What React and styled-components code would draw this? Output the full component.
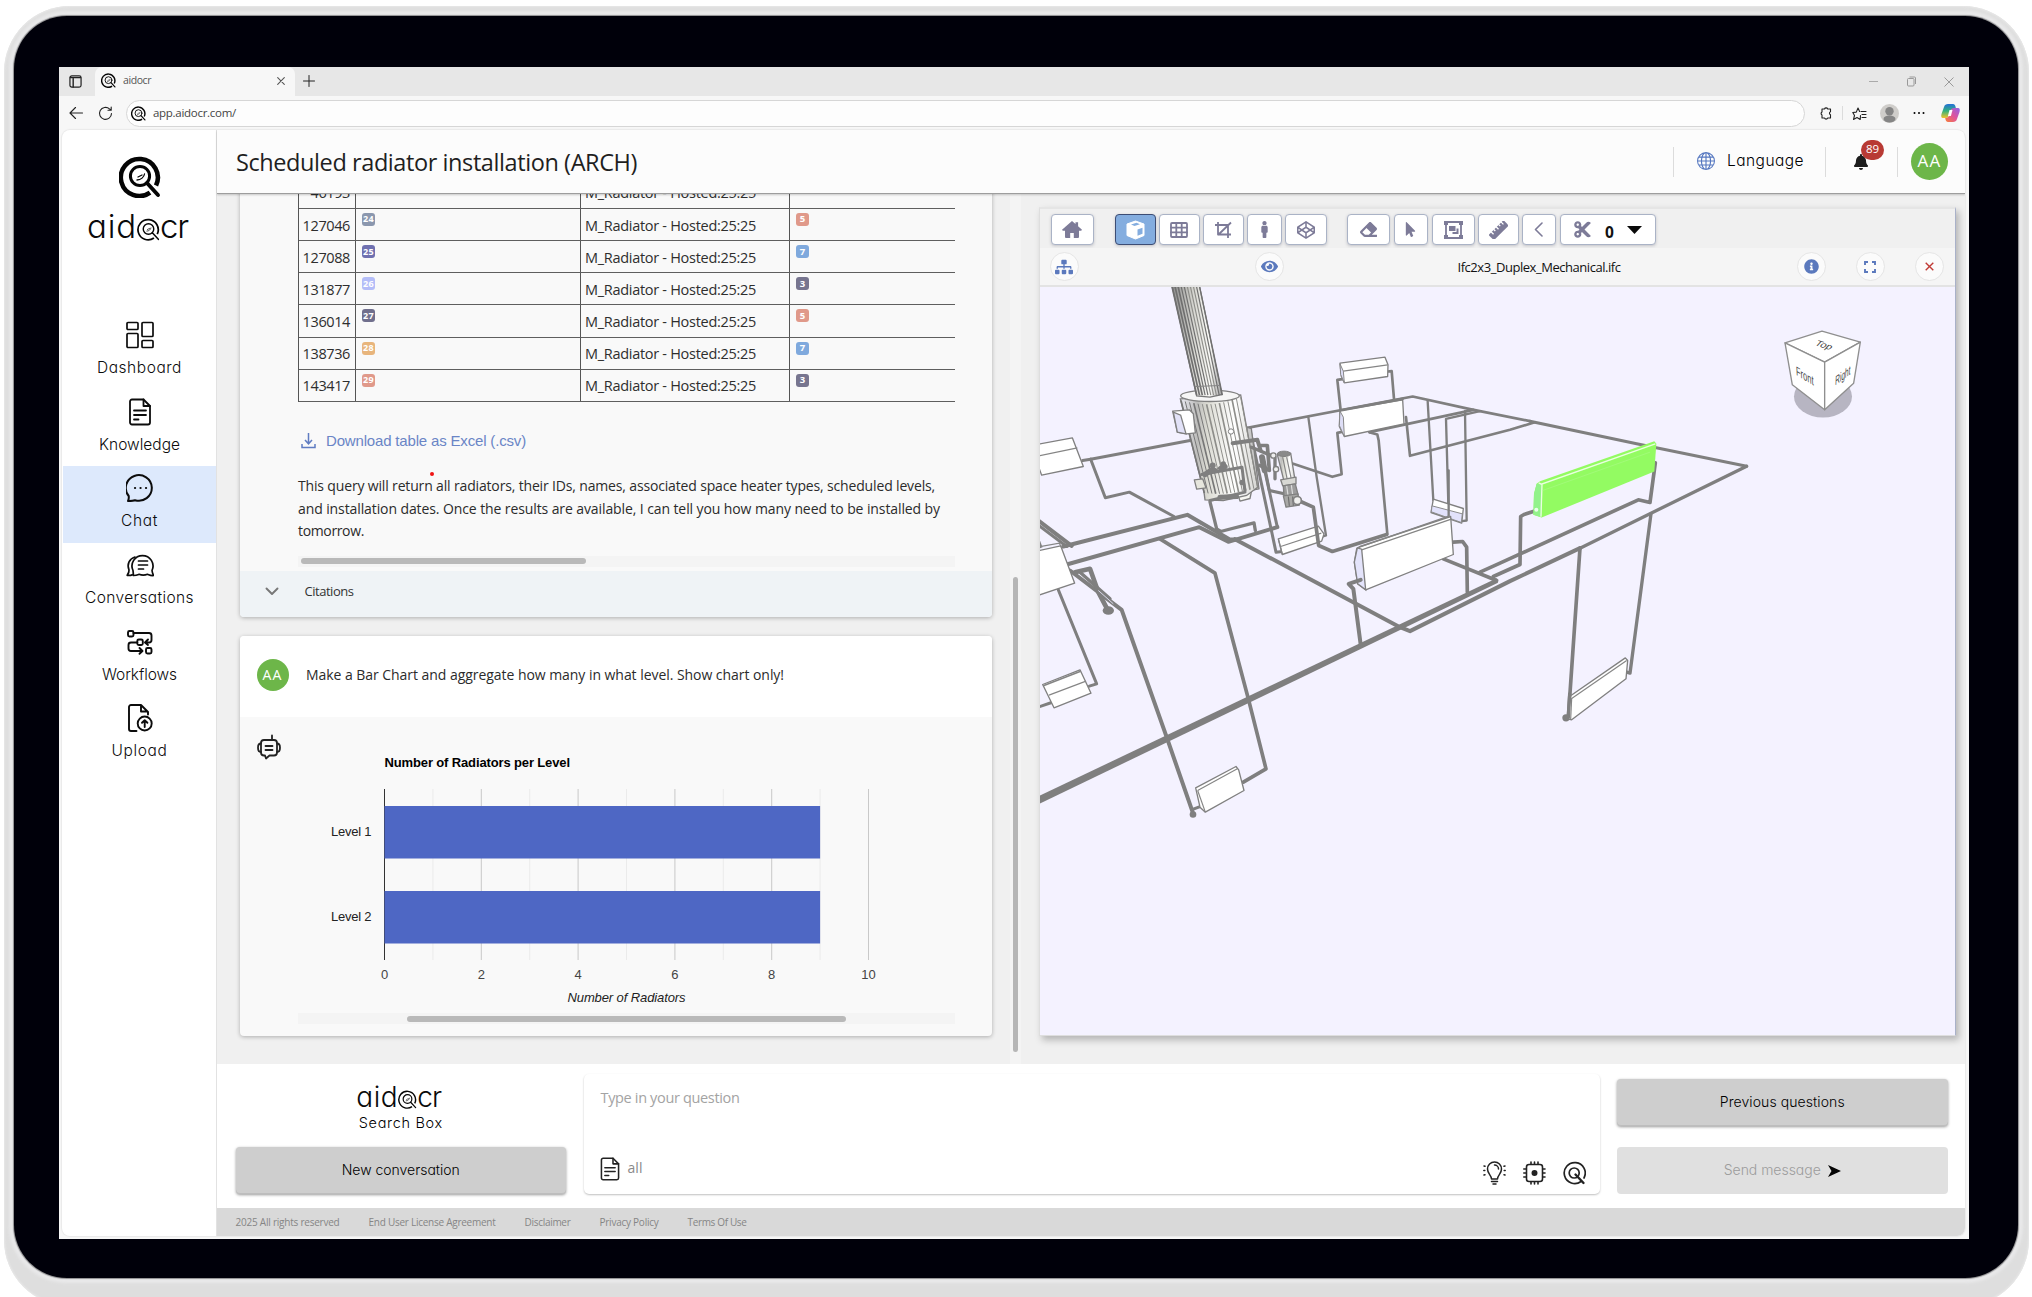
import React, { useLayoutEffect, useRef, useState } from "react";
import styled, { createGlobalStyle, css } from "styled-components";
import {
  FaMale, FaCodepen, FaEraser, FaMousePointer,
  FaCut, FaSitemap, FaEye, FaInfoCircle, FaBell,
} from "react-icons/fa";
import { BsGlobe } from "react-icons/bs";

const UI = '"Open Sans", "Noto Sans", sans-serif';
const ROUND = 'Inter, "Noto Sans", sans-serif';
const ARIAL = '"Liberation Sans", Arial, sans-serif';

const Global = createGlobalStyle`
  * { box-sizing: border-box; }
  body { margin: 0; background: #fff; font-family: ${UI}; color: #222; overflow: hidden; }
  svg { display: block; flex: none; }
`;

/* ---------- text ---------- */
const Span = styled.span`
  display: inline-block;
  align-self: ${(p) => p.$self || "auto"};
  white-space: pre;
  font-family: ${(p) => p.$font || UI};
  font-size: ${(p) => p.$size}px;
  font-weight: ${(p) => p.$weight || 400};
  color: ${(p) => p.$color || "inherit"};
  line-height: ${(p) => (p.$lh ? p.$lh + "px" : 1.3)};
  ${(p) => p.$font === ROUND && css`font-feature-settings: "cv11" 1;`}
`;

/* Spreads its letters so that the line takes the given width. */
function Label({ w, children, ...rest }) {
  const ref = useRef(null);
  const [spacing, setSpacing] = useState(0);
  useLayoutEffect(() => {
    if (!w) return;
    const natural = ref.current.getBoundingClientRect().width;
    setSpacing((w - natural) / children.length);
  }, [w, children]);
  return <Span ref={ref} style={{ letterSpacing: spacing }} {...rest}>{children}</Span>;
}

/* ---------- device ---------- */
const Page = styled.div`
  width: 2032px; height: 1297px; overflow: hidden;
  padding: 6px 3px 0 4px;
`;
const Bezel = styled.div`
  height: 1300px; border-radius: 66px;
  padding: 10px 11px 0 10px;
  background: #dedede;
  box-shadow: inset 0 0 2px 1px #e8e8e8;
`;
const Glass = styled.div`
  height: 1262px; border-radius: 53px;
  background: #00000a;
  padding: 51px 49px 39px 45px;
  box-shadow: 0 0 1px 1px #8d8d8f, 0 0 3px 5px #e9e9ea;
`;
const Screen = styled.div`
  height: 1172px; background: #f7f7f7;
  display: flex; flex-direction: column;
`;

/* ---------- browser ---------- */
const TabStrip = styled.div`
  height: 29px; background: #e7e7e7; display: flex; align-items: stretch;
`;
const TabMenu = styled.div`
  width: 36px; padding-left: 10px; display: flex; align-items: center;
`;
const Tab = styled.div`
  width: 200px; background: #f7f7f7; border-radius: 7px 7px 0 0;
  display: flex; align-items: center; padding: 0 10px 2px 6px; gap: 7px; color: #555;
`;
const Grow = styled.div`flex: 1;`;
const NewTab = styled.div`width: 28px; display: grid; place-items: center; padding-bottom: 2px;`;
const WindowButtons = styled.div`
  display: flex; align-items: center; gap: 27px; padding: 0 15px 0 0;
`;
const AddressRow = styled.div`
  height: 34px; display: flex; align-items: center; padding: 0 9px 0 10px;
`;
const NavIcons = styled.div`display: flex; gap: 15px; width: 57px; align-items: center;`;
const Address = styled.div`
  width: 1679px; height: 27px; border-radius: 14px; background: #fdfdfd;
  border: 1px solid #d6d6d6; display: flex; align-items: center; padding-left: 4px; gap: 7px;
`;
const BrowserTools = styled.div`flex: 1; display: flex; align-items: center;`;
const Slot = styled.div`margin-left: ${(p) => p.$ml}px;`;
const Rule = styled.div`width: 1px; height: ${(p) => p.$h}px; background: #dcdcdc;`;

/* ---------- app shell ---------- */
const AppFrame = styled.div`
  height: 1106px; margin: 0 4px 0 3px; border-radius: 8px; overflow: hidden; display: flex;
  background: #fff; box-shadow: 0 0 1px 1px #e9e9e9;
`;
const Sidebar = styled.nav`
  width: 155px; border-right: 1px solid #e2e2e2; padding: 26px 0 0 1px;
  display: flex; flex-direction: column; align-items: center;
`;
const LogoGap = styled.div`height: 11px; flex: none;`;
const Wordmark = styled.div`
  display: flex; align-items: center; height: ${(p) => p.$h}px; color: #0a0a0a; padding-right: 4px; flex: none;
`;
const Mark = styled.div`padding-top: ${(p) => p.$s * 0.2}px;`;
const NavList = styled.div`width: 100%; margin-top: 70px; flex: none;`;
const NavItem = styled.a`
  width: 100%; height: 76.7px; padding-top: 8px;
  display: flex; flex-direction: column; align-items: center; gap: 9px;
  background: ${(p) => (p.$active ? "#dde9fc" : "transparent")};
  color: #0c0c0c;
`;
const NavIcon = styled.div`width: 30px; height: 28px; display: grid; place-items: center;`;
const Main = styled.main`width: 1748px; display: flex; flex-direction: column;`;
const Header = styled.header`
  height: 64px; background: #fcfcfc; border-bottom: 1px solid #9d9d9d; z-index: 2;
  box-shadow: 0 1px 2px rgba(0,0,0,.2); flex: none;
  display: flex; align-items: center; padding: 0 17px 0 19px;
`;
const TitleBox = styled.div`padding-top: 2px;`;
const Language = styled.div`
  display: flex; align-items: center; gap: 12px; padding: 0 21px 0 23px;
`;
const Bell = styled.div`position: relative; padding: 0 28px 0 27px; color: #1d1d1d;`;
const Count = styled.div`
  position: absolute; left: 35px; top: -14px; width: 23px; height: 20px; border-radius: 10px;
  background: #b83a34; display: grid; place-items: center;
`;
const AvatarGap = styled.div`width: 13px;`;
const Avatar = styled.div`
  width: ${(p) => p.$d}px; height: ${(p) => p.$d}px; border-radius: 50%; background: #6db649;
  display: grid; place-items: center; flex: none;
`;

/* ---------- workspace ---------- */
const Workspace = styled.section`
  height: 870px; background: #f0f0f0; display: flex; padding-left: 14.5px; flex: none;
`;
const Thread = styled.div`
  width: 768px; padding: 0 8px 28px; overflow: hidden;
  display: flex; flex-direction: column; justify-content: flex-end; gap: 19px;
`;
const Card = styled.article`
  position: relative; flex: none; background: #f9f9f9; border-radius: 4px; overflow: hidden;
  box-shadow: 0 1px 4px rgba(0,0,0,.28);
`;
const CardBody = styled.div`padding: 0 37px 4.5px 58.5px;`;
const Table = styled.div`border-left: 1px solid #555; overflow: hidden;`;
const Row = styled.div`
  display: grid; grid-template-columns: 57px 225px 209px 1fr; height: 32.2px;
  border-bottom: 1px solid #5e5e5e; color: #2e2e2e;
`;
const Cell = styled.div`
  display: flex; align-items: center;
  justify-content: ${(p) => (p.$right ? "flex-end" : "flex-start")};
  padding: 3px 5px 0 ${(p) => p.$pl || 4}px;
  border-right: ${(p) => (p.$last ? "0" : "1px solid #555")};
`;
const Chip = styled.div`
  width: 13px; height: 13px; border-radius: 3px; background: ${(p) => p.$c};
  align-self: flex-start; margin-top: 1px; display: grid; place-items: center;
`;
const Download = styled.a`
  margin-top: 27px; height: 24px; display: flex; align-items: center; gap: 10px; padding-left: 3px;
`;
const Paragraph = styled.div`
  margin-top: 22px; display: flex; flex-direction: column; align-items: flex-start; color: #2b2b2b;
`;
const RedDot = styled.div`
  position: absolute; left: 190px; bottom: 141px; width: 4px; height: 4px; border-radius: 50%; background: #f01414;
`;
const Track = styled.div`
  height: 11px; background: #f4f4f4; margin-top: ${(p) => p.$mt}px; padding: ${(p) => p.$pt ?? 2}px 0 0 ${(p) => p.$x}px;
`;
const Thumb = styled.div`width: ${(p) => p.$w}px; height: 6px; border-radius: 3px; background: #b9b9b9;`;
const Citations = styled.div`
  height: 46px; background: #eff3f6; display: flex; align-items: center; padding: 0 0 5px 25px; gap: 26px;
`;
const Question = styled.div`
  height: 81px; background: #fff; display: flex; align-items: center; padding: 0 0 3px 17px; gap: 17.5px;
`;
const Answer = styled.div`height: 319px; display: flex; padding-left: 17px;`;
const BotIcon = styled.div`padding-top: 17px; width: 41px;`;
const ChartBox = styled.div`width: 657px;`;
const VScroll = styled.div`
  width: 11px; margin: 0 18px 0 10px; background: #f4f4f4; display: flex; justify-content: center;
`;
const VThumb = styled.div`width: 5px; height: 475px; margin-top: 383px; border-radius: 3px; background: #b6b6b6;`;

/* ---------- viewer ---------- */
const Viewer = styled.section`
  width: 917px; height: 829px; margin-top: 13px; border: 1px solid #dedede; border-right-color: #a9b1c9;
  border-top: 2px solid #e5e5e5; box-shadow: 3px 4px 7px rgba(0,0,0,.25);
  display: flex; flex-direction: column; background: #f0f0f0;
`;
const Toolbar = styled.div`
  height: 39px; display: flex; align-items: flex-start; padding: 5px 0 0 11px; flex: none;
`;
const Tool = styled.button`
  width: ${(p) => p.$w}px; height: 31px; margin: 0 0 0 ${(p) => p.$ml}px; padding: 0;
  border: 1px solid ${(p) => (p.$on ? "#3d4d74" : "#aab3c6")}; border-radius: 4px;
  background: ${(p) => (p.$on ? "#84addf" : "#fff")}; color: #7d7b98;
  box-shadow: 0 1px 3px rgba(60,60,80,.25);
  display: flex; align-items: center; justify-content: center; gap: ${(p) => p.$gap || 0}px;
`;
const CutCount = styled.div`padding-top: 6px;`;
const SubBar = styled.div`
  height: 39px; background: #f5f5f5; border-bottom: 2px solid #e3e3e3; flex: none;
  display: flex; align-items: center; padding-left: 10px;
`;
const RoundButton = styled.div`
  width: 29px; height: 29px; border-radius: 50%; background: #fbfbfb; border: 1px solid #e5e5e5;
  display: grid; place-items: center; color: #5b79bd; margin-left: ${(p) => p.$ml || 0}px;
`;
const FileName = styled.div`margin-left: 174px; width: 164px; color: #111; padding-bottom: 1px;`;
const Scene = styled.svg`background: #f4f2ff; width: 915px; height: 748px;`;

/* ---------- ask panel ---------- */
const Ask = styled.section`
  height: 144px; background: #fff; display: flex; padding-left: 18.5px; gap: 17.5px; flex: none;
`;
const Brand = styled.div`
  width: 330.5px; padding-top: 19px; display: flex; flex-direction: column; align-items: center;
`;
const SearchBox = styled.div`height: 21px;`;
const Button = styled.button`
  width: 100%; height: 47px; border: 0; border-radius: 4px; padding: 0; flex: none;
  margin-top: ${(p) => p.$mt || 0}px;
  background: ${(p) => (p.$off ? "#e0e0e0" : "#cecece")};
  box-shadow: ${(p) => (p.$off ? "none" : "0 1px 3px rgba(0,0,0,.4), inset 0 -1px 0 #bdbdbd")};
  display: flex; align-items: center; justify-content: center; gap: 7px; color: #262626;
`;
const Prompt = styled.div`
  width: 1016px; height: 120px; margin-top: 10px; border-radius: 5px; padding: 12px 14px 9px 14px;
  box-shadow: 0 1px 2px rgba(0,0,0,.25); display: flex; flex-direction: column; justify-content: space-between;
`;
const Placeholder = styled.div`padding-left: 3px;`;
const PromptFoot = styled.div`display: flex; align-items: center; gap: 6px;`;
const PromptTools = styled.div`display: flex; gap: 17px; margin: 9px 0 0 auto;`;
const Actions = styled.div`width: 330.5px; padding-top: 15px;`;
const Footer = styled.footer`
  height: 28px; background: #d9d9d9; display: flex; align-items: center; gap: 29px; padding-left: 18.5px; color: #858585;
`;

/* ---------- icons ---------- */
const LogoMark = ({ size, sw = 5.5, thin }) => (
  <svg width={size} height={size} viewBox="0 0 42 42" fill="none" stroke="#050505" strokeWidth={sw} strokeLinecap="round">
    <path d="M31 36.600 A18.500 18.500 0 1 1 37 29.500" strokeLinecap="butt" />
    <circle cx="21" cy="20" r="9.6" strokeWidth={thin || sw * 0.65} />
    <path d="M28 27 L39 39" strokeWidth={sw * 0.85} />
    <path d="M18 24 C22 24 25 21 25.5 18 M19 21 L23 19" strokeWidth="1.3" />
  </svg>
);

const AidocrWord = ({ h, size, mark, w1, w2 }) => (
  <Wordmark $h={h}>
    <Label $font={ROUND} $size={size} $weight={300} w={w1} $lh={h}>aid</Label>
    <Mark $s={size}><LogoMark size={mark} sw={3.2} thin={2.6} /></Mark>
    <Label $font={ROUND} $size={size} $weight={300} w={w2} $lh={h}>cr</Label>
  </Wordmark>
);

const Line = ({ w = 28, h = w, vb = "0 0 28 28", sw = 1.7, children }) => (
  <svg width={w} height={h} viewBox={vb} fill="none" stroke="currentColor" strokeWidth={sw} strokeLinecap="round" strokeLinejoin="round">{children}</svg>
);
const DashboardIcon = () => (
  <Line><rect x="1" y="1.5" width="11" height="7" rx="1" /><rect x="1" y="12.5" width="11" height="14" rx="1" />
    <rect x="16" y="1.5" width="11" height="14" rx="1" /><rect x="16" y="19.5" width="11" height="7" rx="1" /></Line>
);
const DocIcon = ({ w = 28 }) => (
  <Line w={w} sw={1.8}><path d="M6 1.5h11.5L24 8v16.5a2 2 0 0 1-2 2H6a2 2 0 0 1-2-2v-21a2 2 0 0 1 2-2z" />
    <path d="M17.5 1.5V8H24M8 12.5h12M8 17h12M8 21.5h4.5" /></Line>
);
const ChatIcon = () => (
  <Line sw={2}><path d="M2 27c1-2 1-3 .7-5A13 12.8 0 1 1 9 26.2C7 26.8 5 27.2 2 27z" />
    <path d="M9 14h.1M14.5 14h.1M20 14h.1" strokeWidth="2.2" /></Line>
);
const ConversationsIcon = () => (
  <Line sw={1.7}><path d="M7.2 24.5c.3-2 0-3-.2-5A10.500 10.500 0 1 1 26 19.500c.2 2 .8 3.400 1.500 5-3.500.3-4.500-.8-6-1.200a12 12 0 0 1-8.500 0c-1.500.6-3 1.300-5.800 1.200z" />
    <path d="M9 6C3 8 .8 13.500 3 19c.2 2-.5 3.500-1.800 5.300 2 .3 3.500.3 5-.6M12.500 10h9M12.500 14h9M12.500 18h5" /></Line>
);
const WorkflowIcon = () => (
  <Line sw={1.9}><rect x="2" y="3" width="5.500" height="5.500" rx="1.500" /><rect x="11.300" y="11.500" width="5.500" height="5.500" rx="1.500" />
    <rect x="20" y="20" width="5.500" height="5.500" rx="1.500" />
    <path d="M7.500 5H23a2.500 2.500 0 0 1 2.500 2.500V12a2.500 2.500 0 0 1-2.500 2.500h-3M22 11.500l-3 3 3 2.500M11.300 14.500H5A2.500 2.500 0 0 0 2.500 17v3.500A2.500 2.500 0 0 0 5 23h11M13.500 20l3 3-3 2.800" /></Line>
);
const UploadIcon = () => (
  <Line sw={1.9}><path d="M10.500 27H5a2 2 0 0 1-2-2V3a2 2 0 0 1 2-2h10l7 7v2.500M15 1v6.500h6.500" />
    <circle cx="18.700" cy="19.500" r="7" /><path d="M18.700 23v-6.500M16 18.800l2.700-2.600 2.700 2.600" /></Line>
);
const BotGlyph = () => (
  <Line w={24} h={26} vb="0 0 24 26" sw={1.8}><path d="M7 6h10a3 3 0 0 1 3 3v9.500a3 3 0 0 1-3 3h-4.500L9 24.500l-1-3H7a3 3 0 0 1-3-3V9a3 3 0 0 1 3-3z" />
    <path d="M4 9.500c-2 0-3 1-3 4.200s1 4.300 3 4.300M20 9.500c2 0 3 1 3 4.200s-1 4.300-3 4.300M15 6V1.500M8.500 12h7M8.500 16h7" /></Line>
);
const Bulb = () => (
  <Line w={23} h={24} vb="0 0 23 24" sw={1.5}><path d="M8.500 18c0-4-4-5-4-10a7 7 0 0 1 14 0c0 5-4 6-4 10zM8.500 20.500h6M10 23h3M11.500 4a4 4 0 0 1 4 4" />
    <path d="M1 5l1 .3M.8 9.500h1M1 14l1-.3M22 5l-1 .3M22.200 9.500h-1M22 14l-1-.3" /></Line>
);
const ChipIcon = () => (
  <Line w={23} h={24} vb="0 0 23 24" sw={1.6}><rect x="3.500" y="3.500" width="16" height="17" rx="2.500" />
    <circle cx="11.500" cy="12" r="2.200" fill="currentColor" />
    <path d="M8 1v2M11.500 1v2M15 1v2M8 21v2M11.500 21v2M15 21v2M.8 8h2M.8 12h2M.8 16h2M20 8h2M20 12h2M20 16h2" /></Line>
);
const QIcon = () => (
  <Line w={23} h={24} vb="0 0 23 24" sw={1.7}><path d="M18 20.500A10.500 10.500 0 1 1 21 17" /><circle cx="11.200" cy="12" r="5" />
    <path d="M12.500 13.500L20.500 22" strokeWidth="2.400" /></Line>
);
const HomeIcon = () => (
  <svg width="20" height="17" viewBox="0 0 20 17" fill="currentColor"><path d="M10 0l3.500 3V1.200h2.600v4L20 8.800l-.8 1H17V16q0 1-1 1h-4.200v-5H8.200v5H4q-1 0-1-1V9.800H.8l-.8-1z" /></svg>
);
const GroupIcon = () => (
  <svg width="19" height="18" viewBox="0 0 19 18"><g fill="currentColor"><path d="M2 1h15v16H2z" fill="none" stroke="currentColor" strokeWidth="1.800" />
    <path d="M0 0h4v4H0zM15 0h4v4h-4zM0 14h4v4H0zM15 14h4v4h-4zM5 5h6.500v5H5zM8.500 11h4V7.500h2V13h-6z" /></g></svg>
);
const RulerIcon = () => (
  <svg width="19" height="18" viewBox="0 0 19 18"><g transform="rotate(-45 9.500 9)">
    <rect x="-1" y="5.500" width="21" height="7.500" rx="1" fill="currentColor" />
    <path d="M3 5v3.500M6.500 5v2.500M10 5v3.500M13.500 5v2.500M17 5v3.500" stroke="#fff" strokeWidth="1.300" /></g></svg>
);

/* ---------- 3D model ---------- */
const Pipe = ({ d, w = 10 }) => (
  <polyline points={d} fill="none" stroke="#7f7f7f" strokeWidth={w} strokeLinejoin="round" strokeLinecap="round" />
);
const Panel = ({ d, fill = "#fff", s = "#808080" }) => <polygon points={d} fill={fill} stroke={s} strokeWidth="4" strokeLinejoin="round" />;
const Edge = ({ d, s = "#858585", w = 3.5 }) => <polyline points={d} fill="none" stroke={s} strokeWidth={w} />;

const bodyStripes = Array.from({ length: 15 }, (_, i) => {
  const t = i / 14;
  return { x1: 453 + 179 * t, y1: 390 + 16 * Math.sin(Math.PI * t) - 10 * t, x2: 523 + 160 * t, y2: 668 + 8 * Math.sin(Math.PI * t) - 16 * t };
});
const flueStripes = Array.from({ length: 10 }, (_, i) => {
  const t = i / 9;
  return { x1: 425 + 83 * t, x2: 500 + 76 * t };
});

function Model() {
  return (
    <Scene viewBox="1040 286 915 748">
      <defs>
        <linearGradient id="steel" x1="0" x2="1"><stop offset="0" stopColor="#e9e9f2" /><stop offset=".22" stopColor="#bdbdbb" /><stop offset=".35" stopColor="#dcdcd4" /><stop offset=".7" stopColor="#fff" /><stop offset="1" stopColor="#d5d5d2" /></linearGradient>
        <linearGradient id="flue" x1="0" x2="1"><stop offset="0" stopColor="#8d8d8d" /><stop offset=".45" stopColor="#d9d9d4" /><stop offset=".75" stopColor="#fbfbf8" /><stop offset="1" stopColor="#a2a2a2" /></linearGradient>
      </defs>
      <g transform="translate(1030 269.500) scale(.33333)">
        {/* far runs */}
        <Pipe w={8} d="652,472 1148,378 1320,416 1500,452" />
        <Pipe d="1500,452 1820,520 2150,587" w={9} />
        <Pipe w={8} d="1018,485 1330,418" />
        <Pipe w={8} d="1128,440 1140,556 1440,478 1512,456" />
        <Pipe w={7} d="1193,392 1210,690" />
        <Pipe w={7} d="1350,422 1248,445 1256,735" />
        <Pipe w={7} d="1305,422 1310,750 1296,752" />
        <Panel d="1210,686 1300,714 1295,758 1203,726" fill="#fff" />
        <polygon points="1206,706 1297,730 1294,756 1204,724" fill="#e2e2fb" stroke="#8b8b8b" strokeWidth="3" />
        <Pipe w={7} d="1256,600 1256,735" />
        <Pipe w={8} d="942,325 922,328 932,420" />
        <Pipe w={8} d="1072,303 1085,302 1092,385" />
        <Panel d="930,278 1065,260 1074,283 1073,318 943,337 934,318" />
        <polygon points="930,280 940,302 943,337 932,312" fill="#dcdcf5" stroke="#888" strokeWidth="3" />
        <Edge d="940,302 1073,283" />
        <Pipe w={8} d="942,483 922,487 935,611 907,619 785,578" />
        <Panel d="930,420 1118,388 1122,460 943,498 928,468" />
        <polygon points="930,422 940,440 943,498 928,465" fill="#dedef6" stroke="#888" strokeWidth="3" />
        <Pipe w={8} d="930,420 1118,385" />
        <Pipe w={8} d="1020,486 1042,492 1046,510 1072,790" />
        <Pipe w={7} d="835,440 860,620 888,795 872,800" />
        {/* left side */}
        <Pipe w={9} d="158,570 182,566 480,510" />
        <Pipe w={9} d="182,566 226,682 298,665 432,738" />
        <Panel d="26,521 127,502 160,588 35,614 26,590" />
        <Edge d="26,556 142,532" />
        <Pipe w={12} d="22,748 125,826" />
        <Pipe w={9} d="22,762 110,828" />
        <Pipe d="100,828 472,733 598,806 625,808" w={12} />
        <Pipe d="110,882 508,770 595,814 742,770" w={12} />
        <Pipe w={11} d="390,805 555,908 655,1285 708,1495 640,1535" />
        <Pipe w={12} d="615,806 1110,1070 1140,1082 1440,932 1650,833" />
        <Pipe w={10} d="1650,833 2150,587" />
        <Pipe w={9} d="660,478 738,845 757,843" />
        <Pipe w={10} d="540,694 560,775 572,783 672,757 676,780" />
        <Pipe w={9} d="702,590 742,770" />
        {/* low radiator by the tank */}
        <Panel d="745,805 865,767 882,790 875,812 757,852" />
        <Edge d="752,828 874,788" />
        <Edge d="745,805 757,852" />
        <Pipe w={11} d="805,690 850,710 866,825 907,843 1070,792" />
        {/* main run */}
        <polygon points="26,1577 1400,923 1404,937 26,1601" fill="#7f7f7f" />
        <Pipe w={11} d="1240,865 1400,930" />
        <Pipe w={11} d="1350,905 1410,878 1825,688 1860,696 1876,577" />
        <Pipe w={11} d="1390,918 1470,882 1472,738 1482,732 1512,722" />
        <Pipe w={11} d="1270,815 1298,813 1310,830 1312,965" />
        {/* large radiator */}
        <Panel d="990,828 1262,738 1270,852 1007,958 983,940 973,875 980,835" />
        <polygon points="982,832 973,875 983,940 1007,958 995,836" fill="#e4e4fb" stroke="#808080" strokeWidth="4" />
        <Edge d="982,832 1258,736" />
        <Edge d="995,838 1264,746" />
        <Pipe w={12} d="992,928 956,940 970,955 992,1122" />
        {/* left large panel and its pipes */}
        <Pipe w={12} d="120,900 275,1018 410,1400 488,1625" />
        <Pipe w={14} d="135,905 180,895 205,965 235,1022" />
        <Pipe w={10} d="150,905 240,985" />
        <ellipse cx="235" cy="1020" rx="17" ry="13" fill="#7f7f7f" />
        <Edge d="205,960 250,1000" s="#d8d8e8" w={3} />
        <Pipe w={9} d="85,958 200,1240 178,1247" />
        <Panel d="20,842 92,826 134,938 20,976" />
        <Edge d="20,830 88,818 96,834" />
        <Edge d="22,800 34,832" w={8} />
        <Pipe w={9} d="24,1310 65,1296" />
        <Panel d="38,1242 150,1198 183,1268 72,1312" />
        <Edge d="57,1274 168,1232" />
        <Edge d="40,1246 152,1202" w={5} />
        {/* bottom radiator */}
        <Pipe w={9} d="490,1616 516,1606" />
        <circle cx="489" cy="1632" r="10" fill="#7f7f7f" />
        <Panel d="497,1552 618,1488 626,1498 642,1560 526,1625 510,1610" />
        <Edge d="503,1560 622,1495" />
        <Edge d="503,1560 526,1625" />
        {/* right drop */}
        <Pipe w={11} d="1650,833 1615,1340" />
        <Pipe w={10} d="1863,730 1800,1208 1788,1204" />
        <Panel d="1623,1275 1786,1162 1793,1170 1788,1225 1625,1348 1612,1345" />
        <Edge d="1624,1285 1790,1170" />
        <Edge d="1625,1283 1622,1346" />
        <Pipe w={10} d="1619,1270 1615,1340" />
        <circle cx="1608" cy="1342" r="11" fill="#7f7f7f" />
        {/* selected radiator */}
        <polygon points="1530,632 1873,512 1879,520 1873,603 1535,741 1510,733 1512,670 1520,640" fill="#93fb62" />
        <polygon points="1520,640 1534,640 1534,740 1510,733 1512,670" fill="#92f28b" />
        <polyline points="1526,637 1534,641 1876,520" fill="none" stroke="#e9ffe0" strokeWidth="4" />
        <polyline points="1536,641 1533,739" fill="none" stroke="#e9ffe0" strokeWidth="4" />
        <polyline points="1538,660 1860,545" fill="none" stroke="#a7fb83" strokeWidth="2" />
        <circle cx="1519" cy="718" r="6" fill="#eaffea" />
        {/* tank */}
        <Panel d="650,470 664,474 687,655 660,660" fill="#c9c9c9" />
        <Panel d="622,665 664,664 660,684 630,692" fill="#f7f7f2" />
        <polygon points="451,385 632,373 683,650 650,675 580,690 525,688 522,665" fill="url(#steel)" stroke="#808080" strokeWidth="4" />
        {bodyStripes.map((l, i) => <line key={i} {...l} stroke={i < 5 ? "#777" : "#8e8e8a"} strokeWidth={i % 3 ? 3 : 5} />)}
        <ellipse cx="540" cy="376" rx="88" ry="17" fill="#f6f6f6" stroke="#808080" strokeWidth="4" />
        <polygon points="425,40 507,40 577,372 540,380 500,376" fill="url(#flue)" stroke="#777" strokeWidth="4" />
        {flueStripes.map((l, i) => <line key={i} y1="44" y2="374" {...l} stroke={i > 4 && i < 8 ? "#8e8e8a" : "#6f6f6f"} strokeWidth={i < 3 ? 5 : 3.500} />)}
        <Edge d="495,348 570,345" />
        <Panel d="428,422 478,418 490,430 496,487 470,490 442,485" />
        <polygon points="430,425 452,434 468,490 442,485" fill="#e2e2f8" stroke="#808080" strokeWidth="4" />
        <Panel d="493,628 518,625 528,652 500,656" fill="#e6e6dd" />
        <circle cx="603" cy="483" r="8" fill="#fff" stroke="#808080" strokeWidth="3" />
        <Pipe w={12} d="608,518 682,508 692,540" />
        <Pipe w={9} d="515,612 636,590 645,665 540,690" />
        <Pipe w={16} d="525,612 545,598 555,600" />
        <Pipe w={16} d="572,594 585,588" />
        <Pipe w={15} d="570,680 620,678" />
        <circle cx="548" cy="585" r="9" fill="#7f7f7f" /><circle cx="580" cy="580" r="8" fill="#7f7f7f" />
        <circle cx="636" cy="636" r="8" fill="#7f7f7f" />
        <Pipe w={10} d="664,530 735,560 735,625" />
        <Pipe w={11} d="692,525 712,525 718,600 690,585" />
        <Pipe w={18} d="696,560 704,600" />
        <Pipe w={9} d="704,590 718,660 790,676" />
        {/* pump */}
        <Panel d="742,552 782,548 795,628 762,632" fill="url(#steel)" />
        <ellipse cx="762" cy="550" rx="20" ry="8" fill="#8a8a8a" stroke="#808080" strokeWidth="3" />
        <Edge d="758,560 772,628" /><Edge d="770,560 784,626" />
        <Panel d="752,628 798,620 798,640 758,646" fill="#d8d8d4" />
        <Panel d="760,646 796,640 804,672 762,676" fill="#9c9c9c" />
        <Edge d="770,646 774,674" s="#ddd" /><Edge d="784,644 788,672" s="#ddd" />
        <Panel d="760,676 804,670 808,704 768,710" fill="#a8a8a6" />
        <Edge d="775,678 778,706" s="#6f6f6f" /><Edge d="788,678 790,706" s="#6f6f6f" />
        <circle cx="730" cy="555" r="8" fill="#eee" stroke="#808080" strokeWidth="4" />
        <circle cx="738" cy="596" r="8" fill="#eee" stroke="#808080" strokeWidth="4" />
        <circle cx="802" cy="690" r="12" fill="#f0f0ee" stroke="#808080" strokeWidth="5" />
        {/* view cube */}
        <ellipse cx="2379" cy="378" rx="87" ry="63" fill="#b7b5c2" />
        <Panel d="2265,217 2376,182 2491,215 2384,275" s="#8f8f8f" />
        <Panel d="2265,217 2384,275 2384,418 2287,343" s="#8f8f8f" />
        <Panel d="2384,275 2491,215 2471,338 2384,418" s="#8f8f8f" />
        <g fontFamily="Liberation Sans" fill="#444" textAnchor="middle">
          <text transform="matrix(.88 .28 -.55 .62 2376 231)" fontSize="34">Top</text>
          <text transform="matrix(.66 .4 .06 1.150 2325 329)" fontSize="34">Front</text>
          <text transform="matrix(.58 -.42 -.05 1.150 2438 328)" fontSize="34">Right</text>
        </g>
      </g>
    </Scene>
  );
}

/* ---------- chart ---------- */
const chart = { bars: [{ name: "Level 1", value: 9 }, { name: "Level 2", value: 9 }] };
function BarChart() {
  const x0 = 86.5, step = 48.4;
  return (
    <svg width="657" height="296" viewBox="0 0 657 296" fontFamily={ARIAL} fontSize="13">
      <text x={x0} y="50" fontWeight="700" fill="#000" textLength="185.500">Number of Radiators per Level</text>
      {Array.from({ length: 11 }, (_, i) => (
        <rect key={i} x={x0 - 0.5 + i * step} y="72" width="1" height="171" fill={i === 0 ? "#333" : i % 2 ? "#ebebeb" : "#c9c9c9"} />
      ))}
      {chart.bars.map((b, i) => (
        <g key={b.name}>
          <rect x={x0} y={89 + i * 85} width={b.value * step} height="52.500" fill="#4e67c4" />
          <text x="73.500" y={119 + i * 85} textAnchor="end" fill="#222" textLength="40.500">{b.name}</text>
        </g>
      ))}
      {[0, 2, 4, 6, 8, 10].map((n) => <text key={n} x={x0 + n * step} y="262" textAnchor="middle" fill="#444">{n}</text>)}
      <text x={x0 + 242} y="284.500" textAnchor="middle" fontStyle="italic" fill="#222" textLength="118">Number of Radiators</text>
    </svg>
  );
}

/* ---------- data ---------- */
const rows = [
  ["46193", "23", "#eccf96", "5", "#e9b9a4"],
  ["127046", "24", "#8b97ae", "5", "#e0998a"],
  ["127088", "25", "#6f70b0", "7", "#7fa9dd"],
  ["131877", "26", "#b4bdf8", "3", "#77758f"],
  ["136014", "27", "#706f8d", "5", "#e0998a"],
  ["138736", "28", "#e8b57c", "7", "#7fa9dd"],
  ["143417", "29", "#e0998a", "3", "#77758f"],
];
const nav = [
  ["Dashboard", 85, DashboardIcon], ["Knowledge", 81, DocIcon], ["Chat", 37, ChatIcon],
  ["Conversations", 109, ConversationsIcon], ["Workflows", 75, WorkflowIcon], ["Upload", 56, UploadIcon],
];
const legal = [["2025 All rights reserved", 104], ["End User License Agreement", 127], ["Disclaimer", 46], ["Privacy Policy", 59], ["Terms Of Use", 59]];

function Browser() {
  return (
    <>
      <TabStrip>
        <TabMenu>
          <Line w={13} vb="0 0 14 14" sw={1.3}><rect x="1" y="1" width="12" height="12" rx="2" /><path d="M1.500 2.800h11M4.500 4v9" strokeWidth="1.500" /></Line>
        </TabMenu>
        <Tab>
          <LogoMark size={15} sw={4} />
          <Label $size={10.5} w={28}>aidocr</Label>
          <Grow />
          <Line w={8} vb="0 0 8 8" sw={1.1}><path d="M.7.7l6.600 6.600M7.300.7L.7 7.300" /></Line>
        </Tab>
        <NewTab><Line w={12} vb="0 0 12 12" sw={1}><path d="M6 .5v11M.5 6h11" /></Line></NewTab>
        <Grow />
        <WindowButtons>
          <svg width="11" height="11" stroke="#aaa"><path d="M1 5.500h9" /></svg>
          <svg width="11" height="11" stroke="#999" fill="none"><rect x="1.500" y="2.500" width="6.500" height="7.500" rx="1" /><path d="M3.500 1h5q1 0 1 1v6" /></svg>
          <svg width="10" height="10" stroke="#999"><path d="M.5.5l9 9M9.500.5l-9 9" /></svg>
        </WindowButtons>
      </TabStrip>
      <AddressRow>
        <NavIcons>
          <Line w={14} vb="0 0 14 14" sw={1.1}><path d="M13.500 7H1M6.500 1.500L1 7l5.500 5.500" /></Line>
          <Line w={15} vb="0 0 15 15" sw={1.1}><path d="M13.500 7.500a6 6 0 1 1-2-4.600L13 4M13.200 1v3.300H10" /></Line>
        </NavIcons>
        <Address><LogoMark size={15} sw={4} /><Label $size={11.5} $color="#444" w={83}>app.aidocr.com/</Label></Address>
        <BrowserTools>
          <Slot $ml={14}><Line w={14} vb="0 0 14 14" sw={1.1}><path d="M3 3h2.500a1.700 1.700 0 0 1 3.200 0H11.500v2.800a1.600 1.600 0 0 0 0 3V12H8.700a1.700 1.700 0 0 1-3.200 0H3V9a1.700 1.700 0 0 1 0-3z" /></Line></Slot>
          <Slot $ml={9}><Rule $h={14} /></Slot>
          <Slot $ml={9}><Line w={15} vb="0 0 15 15" sw={1.1}><path d="M8.500 9.500l-.3 4L5 11.500l-3.500 2 1-4L.8 6.500l3.500-.4L6 2l1.600 3.500M9 5.500h5M10 8.500h4M10 11.500h4" /></Line></Slot>
          <Slot $ml={13}><svg width="19" height="19" viewBox="0 0 19 19"><circle cx="9.500" cy="9.500" r="9.500" fill="#cfcdca" /><circle cx="9.500" cy="7.200" r="4.200" fill="#858585" /><ellipse cx="9.500" cy="15" rx="6" ry="3.400" fill="#858585" /></svg></Slot>
          <Slot $ml={14}><svg width="12" height="4"><circle cx="1.500" cy="2" r="1" /><circle cx="6" cy="2" r="1" /><circle cx="10.500" cy="2" r="1" /></svg></Slot>
          <Slot $ml={16}><svg width="19" height="18" viewBox="0 0 19 18">
            <defs>
              <linearGradient id="cpa" x1="0" y1="0" x2="0" y2="1"><stop offset="0" stopColor="#2470d8" /><stop offset=".5" stopColor="#34b27b" /><stop offset="1" stopColor="#f5c32c" /></linearGradient>
              <linearGradient id="cpb" x1="1" y1="0" x2="0" y2="1"><stop offset="0" stopColor="#8f62e8" /><stop offset=".5" stopColor="#e0549b" /><stop offset="1" stopColor="#f78038" /></linearGradient>
            </defs>
            <path d="M7 0h5c1.500 0 2 1 2.500 2.500L15 5h-3c-2 0-2.500 1-3 3l-1 3c-.5 2-1 3-3 3H2c-2 0-2-2-1.500-4L3 3C3.700.8 5 0 7 0z" fill="url(#cpa)" />
            <path d="M12 18H7c-1.500 0-2-1-2.500-2.500L4.200 14C7 14 8 12.500 8.500 11L9.500 7c.5-2 1.500-3 3.500-3h4c2 0 2 2 1.500 4L16 15c-.7 2.200-2 3-4 3z" fill="url(#cpb)" />
            <path d="M8.500 6h3l-1.600 6h-3z" fill="#fff" />
          </svg></Slot>
        </BrowserTools>
      </AddressRow>
    </>
  );
}

function ViewerPanel() {
  return (
    <Viewer>
      <Toolbar>
        <Tool $w={43} $ml={0}><HomeIcon /></Tool>
        <Tool $w={41} $ml={21} $on>
          <svg width="19" height="20" viewBox="0 0 19 20"><path d="M9.500 1L18 4v11.500L9.500 19 1 15.500V4z" fill="#fff" stroke="#fff" strokeLinejoin="round" /><path d="M5 4.500l5.500-1.800L14 4.300 8.500 6zM11.500 9.500l5-1.800v6l-5 2z" fill="#84addf" /></svg>
        </Tool>
        <Tool $w={41} $ml={3}><Line w={18} h={16} vb="0 0 18 16" sw={1.8}><rect x="1" y="1" width="16" height="14" rx="1" /><path d="M1 5.600h16M1 10.400h16M6.300 1v14M11.700 1v14" /></Line></Tool>
        <Tool $w={41} $ml={3}><Line w={18} vb="0 0 18 18" sw={1.8}><path d="M1 4h13v13M4 1v12.500h13M4 14L17 1.500" strokeLinecap="butt" /></Line></Tool>
        <Tool $w={35} $ml={3}><FaMale size={17} /></Tool>
        <Tool $w={42} $ml={3}><FaCodepen size={18} /></Tool>
        <Tool $w={43} $ml={20}><FaEraser size={17} /></Tool>
        <Tool $w={34} $ml={4}><FaMousePointer size={15} /></Tool>
        <Tool $w={43} $ml={4}><GroupIcon /></Tool>
        <Tool $w={41} $ml={3}><RulerIcon /></Tool>
        <Tool $w={34} $ml={3}><Line w={9} h={15} vb="0 0 9 15" sw={1.6}><path d="M8 1L1.500 7.500 8 14" /></Line></Tool>
        <Tool $w={96} $ml={4} $gap={13}>
          <FaCut size={19} />
          <CutCount><Label $size={15.5} $weight={700} $color="#111">0</Label></CutCount>
          <svg width="15" height="8"><path d="M0 0h15L7.500 8z" fill="#0a0a0a" /></svg>
        </Tool>
      </Toolbar>
      <SubBar>
        <RoundButton><FaSitemap size={18} /></RoundButton>
        <RoundButton $ml={176}><FaEye size={17} /></RoundButton>
        <FileName><Label $size={13} w={163}>Ifc2x3_Duplex_Mechanical.ifc</Label></FileName>
        <RoundButton $ml={175}><FaInfoCircle size={15} /></RoundButton>
        <RoundButton $ml={30}><Line w={12} vb="0 0 12 12" sw={1.9}><path d="M1 4V1h3M8 1h3v3M11 8v3H8M4 11H1V8" strokeLinecap="butt" strokeLinejoin="miter" /></Line></RoundButton>
        <RoundButton $ml={30}><svg width="9" height="9" stroke="#c03a35" strokeWidth="1.400"><path d="M.7.7l7.600 7.600M8.300.7L.7 8.300" /></svg></RoundButton>
      </SubBar>
      <Model />
    </Viewer>
  );
}

export default function App() {
  return (
    <Page>
      <Global />
      <Bezel><Glass><Screen>
        <Browser />
        <AppFrame>
          <Sidebar>
            <LogoMark size={42} sw={4.6} thin={3} />
            <LogoGap />
            <AidocrWord h={34} size={33} mark={23} w1={50} w2={28} />
            <NavList>
              {nav.map(([name, w, Icon]) => (
                <NavItem key={name} $active={name === "Chat"}>
                  <NavIcon><Icon /></NavIcon>
                  <Label $font={ROUND} $size={15.5} $weight={300} w={w}>{name}</Label>
                </NavItem>
              ))}
            </NavList>
          </Sidebar>
          <Main>
            <Header>
              <TitleBox><Label $size={23.5} w={401} $color="#1f1f1f">Scheduled radiator installation (ARCH)</Label></TitleBox>
              <Grow />
              <Rule $h={30} />
              <Language><BsGlobe size={18} color="#5577c0" /><Label $font={ROUND} $size={15.5} $weight={300} w={77} $color="#000">Language</Label></Language>
              <Rule $h={30} />
              <Bell><FaBell size={16} /><Count><Label $size={11.5} $color="#fff" w={13}>89</Label></Count></Bell>
              <Rule $h={30} />
              <AvatarGap />
              <Avatar $d={37}><Label $size={17} $color="#fff" w={24}>AA</Label></Avatar>
            </Header>
            <Workspace>
              <Thread>
                <Card>
                  <CardBody>
                    <Table>
                      {rows.map(([id, n, c, level, lc]) => (
                        <Row key={id}>
                          <Cell $right><Label $size={14.5} w={id.length * 7.9}>{id}</Label></Cell>
                          <Cell $pl={6}><Chip $c={c}><Label $size={9} $weight={700} $color="#fff" $lh={12} w={11}>{n}</Label></Chip></Cell>
                          <Cell $pl={4}><Label $size={14.5} w={171}>M_Radiator - Hosted:25:25</Label></Cell>
                          <Cell $pl={6} $last><Chip $c={lc}><Label $size={9.5} $weight={700} $color="#fff" $lh={12}>{level}</Label></Chip></Cell>
                        </Row>
                      ))}
                    </Table>
                    <Download>
                      <svg width="15" height="16" viewBox="0 0 15 16" fill="none" stroke="#5f7cc2" strokeWidth="1.500"><path d="M7.500 0v10.500M4 7l3.500 3.800L11 7M1 11v3.500h13V11" /></svg>
                      <Label $font={ARIAL} $size={15} w={200} $color="#6a85c6">Download table as Excel (.csv)</Label>
                    </Download>
                    <Paragraph>
                      <Label $size={14} $lh={22.5} w={637}>This query will return all radiators, their IDs, names, associated space heater types, scheduled levels,</Label>
                      <Label $size={14} $lh={22.5} w={642}>and installation dates. Once the results are available, I can tell you how many need to be installed by</Label>
                      <Label $size={14} $lh={22.5} w={66}>tomorrow.</Label>
                    </Paragraph>
                    <Track $mt={13} $x={3}><Thumb $w={285} /></Track>
                  </CardBody>
                  <Citations>
                    <Line w={14} h={9} vb="0 0 14 9" sw={1.9}><path d="M1.500 1.500L7 7l5.500-5.500" stroke="#777" /></Line>
                    <Label $size={13} w={49} $color="#333">Citations</Label>
                  </Citations>
                  <RedDot />
                </Card>
                <Card>
                  <Question>
                    <Avatar $d={32}><Label $size={14} $color="#fff" w={20}>AA</Label></Avatar>
                    <Label $size={14} w={478} $color="#2b2b2b">Make a Bar Chart and aggregate how many in what level. Show chart only!</Label>
                  </Question>
                  <Answer>
                    <BotIcon><BotGlyph /></BotIcon>
                    <ChartBox>
                      <BarChart />
                      <Track $mt={0} $x={109} $pt={3}><Thumb $w={439} /></Track>
                    </ChartBox>
                  </Answer>
                </Card>
              </Thread>
              <VScroll><VThumb /></VScroll>
              <ViewerPanel />
            </Workspace>
            <Ask>
              <Brand>
                <AidocrWord h={28} size={28} mark={19} w1={42} w2={24} />
                <SearchBox><Label $font={ROUND} $size={14.5} $weight={300} w={84} $color="#000">Search Box</Label></SearchBox>
                <Button $mt={15}><Label $font={ROUND} $size={14} $weight={300} w={118} $color="#000">New conversation</Label></Button>
              </Brand>
              <Prompt>
                <Placeholder><Label $size={14.5} w={139} $color="#a3a3a3">Type in your question</Label></Placeholder>
                <PromptFoot>
                  <DocIcon w={24} />
                  <Label $size={14} w={15} $color="#8a8a8a">all</Label>
                  <PromptTools><Bulb /><ChipIcon /><QIcon /></PromptTools>
                </PromptFoot>
              </Prompt>
              <Actions>
                <Button><Label $font={ROUND} $size={14} $weight={300} w={125} $color="#000">Previous questions</Label></Button>
                <Button $mt={21} $off>
                  <Label $font={ROUND} $size={14} $weight={300} w={97} $color="#9c9c9c">Send message</Label>
                  <svg width="13" height="12"><path d="M0 0l13 6-13 6 3.500-6z" fill="#050505" /></svg>
                </Button>
              </Actions>
            </Ask>
            <Footer>{legal.map(([t, w]) => <Label key={t} $size={10} w={w}>{t}</Label>)}</Footer>
          </Main>
        </AppFrame>
      </Screen></Glass></Bezel>
    </Page>
  );
}
